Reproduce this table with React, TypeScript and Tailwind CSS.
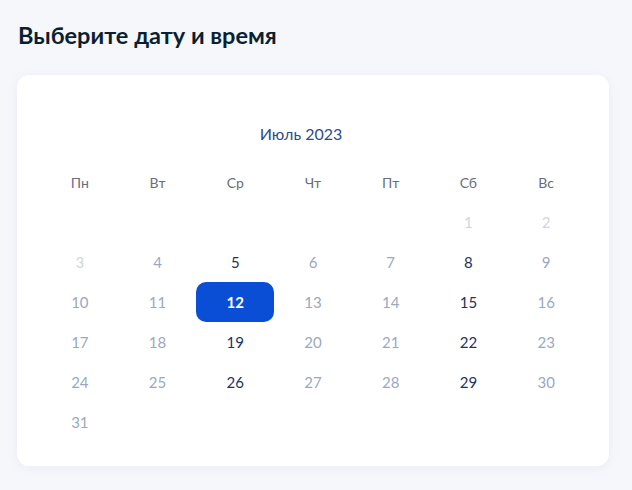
import * as React from 'react';

const WEEKDAYS = ['Пн', 'Вт', 'Ср', 'Чт', 'Пт', 'Сб', 'Вс'];

// past: уже прошедшие дни, active: есть свободное время
const PAST = [1, 2, 3];
const ACTIVE = [5, 8, 15, 19, 22, 26, 29];
const SELECTED = 12;

function DayCell({ day }: { day: number | null }) {
  if (day === null) return <div className="h-10" />;
  if (day === SELECTED) {
    return (
      <div className="h-10 flex items-center justify-center">
        <div className="w-[78px] h-10 rounded-[10px] bg-[#0b4ed6] flex items-center justify-center text-[15px] font-bold text-white">
          {day}
        </div>
      </div>
    );
  }
  let color = 'text-[#9aa8c4]';
  if (PAST.includes(day)) color = 'text-[#d0d6e0]';
  if (ACTIVE.includes(day)) color = 'text-[#1e3263]';
  return (
    <div className={`h-10 flex items-center justify-center text-[15px] ${color}`}>{day}</div>
  );
}

export default function App() {
  // июль 2023 начинается с субботы
  const cells: Array<number | null> = [null, null, null, null, null];
  for (let d = 1; d <= 31; d++) cells.push(d);

  return (
    <div className="min-h-[490px] bg-[#f5f7fb] px-[17px] pt-[21px] font-['Lato','Noto_Sans',sans-serif]">
      <h1 className="text-[23.5px] leading-[28px] font-bold text-[#0b1f33] pl-px">Выберите дату и время</h1>
      <div className="mt-[26px] w-[592px] bg-white rounded-xl shadow-[0_2px_12px_rgba(20,40,90,0.05)] px-6 pt-[47px] pb-6">
        <div className="text-center text-[16px] leading-6 text-[#2d4d8a] pr-6">Июль 2023</div>
        <div className="grid grid-cols-7 mt-[26px]">
          {WEEKDAYS.map((w) => (
            <div key={w} className="h-5 flex items-center justify-center text-[14px] text-[#66707d]">
              {w}
            </div>
          ))}
        </div>
        <div className="grid grid-cols-7 mt-[10px]">
          {cells.map((d, i) => (
            <DayCell key={i} day={d} />
          ))}
        </div>
      </div>
    </div>
  );
}
